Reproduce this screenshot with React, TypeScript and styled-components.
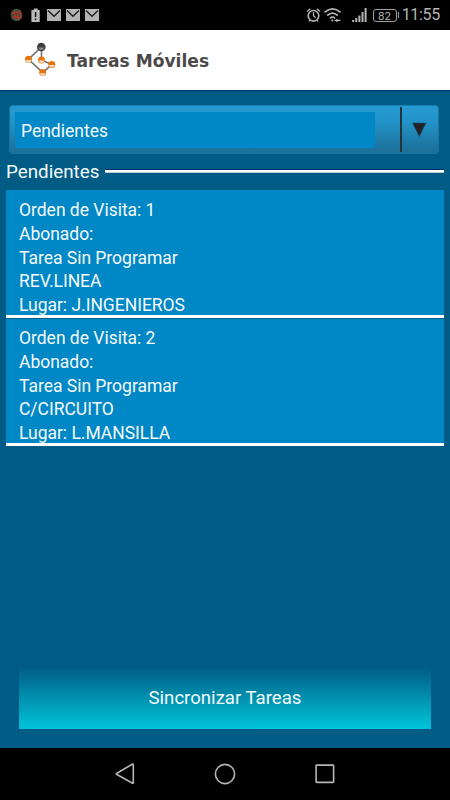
import React from 'react';
import styled, { createGlobalStyle } from 'styled-components';

const GlobalStyle = createGlobalStyle`
  * { box-sizing: border-box; }
  body { margin: 0; background: #000; font-family: Roboto, "Liberation Sans", sans-serif; }
`;

const Screen = styled.div`
  width: 450px;
  height: 800px;
  display: flex;
  flex-direction: column;
  overflow: hidden;
  background: #000;
  color: #f4f9fc;
`;

const StatusBar = styled.div`
  height: 30px;
  display: flex;
  align-items: center;
  justify-content: space-between;
  flex: none;
  padding: 0 10px 0 9px;
  color: #b4b4b4;
`;

const StatusGroup = styled.div`
  display: flex;
  align-items: center;
  height: 30px;
  svg { display: block; }
`;

const Battery = styled.div`
  width: 24px;
  height: 13px;
  margin-left: 6px;
  border: 1px solid #a0a0a0;
  border-radius: 3px;
  font: 11.5px/12px Roboto, sans-serif;
  text-align: center;
`;

const BatteryTip = styled.div`
  width: 1.5px;
  height: 6px;
  margin-left: 1px;
  background: #999;
`;

const Clock = styled.span`
  width: 36px;
  margin-left: 5px;
  display: flex;
  justify-content: flex-end;
  font: 16px/32px Roboto, sans-serif;
  letter-spacing: -0.3px;
  white-space: nowrap;
`;

const Header = styled.header`
  height: 61px;
  flex: none;
  display: flex;
  align-items: center;
  padding-left: 20px;
  background: #fff;
  border-bottom: 1px solid #00326e;
  svg { display: block; }
`;

const Title = styled.h1`
  margin: 1px 0 0 7px;
  color: #4c4849;
  font: 700 17.1px/24px "DejaVu Sans", sans-serif;
  white-space: nowrap;
`;

const Main = styled.main`
  flex: 1;
  display: flex;
  flex-direction: column;
  padding: 14px 6px 19px;
  background: #005c85;
`;

const Select = styled.div`
  height: 49px;
  flex: none;
  margin: 0 5px 0 3px;
  padding-left: 5px;
  display: flex;
  align-items: center;
  border: 1px solid #17759f;
  border-top-color: #1880b0;
  border-radius: 4px;
  background: linear-gradient(#259bd3, #2292c8 35%, #1d749f 88%, #1c7099);
`;

const SelectValue = styled.div`
  width: 360px;
  height: 36px;
  padding-left: 6px;
  background: #0087c5;
  font-size: 17.5px;
  line-height: 39px;
`;

const SelectDivider = styled.div`
  width: 2px;
  height: 45px;
  margin-left: 25px;
  background: #24323a;
`;

const SelectArrow = styled.svg`
  display: block;
  margin-left: 10px;
`;

const SectionHeading = styled.div`
  display: flex;
  align-items: center;
  height: 36px;
  gap: 6px;
  font-size: 18.8px;
  line-height: 38px;
`;

const SectionRule = styled.div`
  flex: 1;
  height: 4px;
  background: #fff;
  border-top: 1px solid #002d70;
  border-bottom: 1px solid #bdcbd8;
  margin-top: -2px;
`;

const TaskList = styled.div`
  display: flex;
  flex-direction: column;
`;

const Task = styled.article`
  height: 128px;
  padding: 8px 0 0 13px;
  background: #0087c5;
  border-bottom: 3px solid #fff;
  & + & { padding-top: 7px; border-top: 1px solid #00608c; }
`;

const TaskLine = styled.div`
  height: 23.75px;
  font-size: 17.5px;
  letter-spacing: -0.02px;
  line-height: 24px;
  white-space: nowrap;
`;

const SyncButton = styled.button`
  height: 62px;
  margin: auto 13px 0;
  padding: 0;
  border: 0;
  background: linear-gradient(#005c85, #00c4d9);
  color: #f4f9fc;
  font: 18.6px Roboto, sans-serif;
`;

const NavBar = styled.nav`
  height: 52px;
  flex: none;
  display: flex;
  justify-content: center;
  align-items: center;
  gap: 76px;
  svg { display: block; }
`;

const tasks = [
  ['Orden de Visita: 1', 'Abonado:', 'Tarea Sin Programar', 'REV.LINEA', 'Lugar: J.INGENIEROS'],
  ['Orden de Visita: 2', 'Abonado:', 'Tarea Sin Programar', 'C/CIRCUITO', 'Lugar: L.MANSILLA'],
];

const nodes = [
  { x: 41.3, y: 47, r: 4.3, top: '#403b3c', bottom: '#8b8788' },
  { x: 28.5, y: 59.3, r: 3.5, top: '#e87509', bottom: '#f0dcc9' },
  { x: 41.5, y: 60, r: 3.5, top: '#e87509', bottom: '#f0dcc9' },
  { x: 51.8, y: 64.5, r: 3.5, top: '#e87509', bottom: '#f0dcc9' },
  { x: 42.7, y: 72.6, r: 3.5, top: '#e87509', bottom: '#f0dcc9' },
];

function Logo() {
  return (
    <svg width="40" height="42" viewBox="20 39 40 42">
      <path d="M41.3 47 28.5 59.3 42.7 72.6 51.8 64.5 41.5 60V47" fill="none" stroke="#777172" strokeWidth="1.6" />
      {nodes.map((n) => (
        <g key={`${n.x}-${n.y}`}>
          <circle cx={n.x} cy={n.y} r={n.r} fill={n.top} />
          <path d={`M${n.x - 3} ${n.y + 0.6}h6q-.8 2.5-3 2.5t-3-2.5`} fill={n.bottom} />
        </g>
      ))}
    </svg>
  );
}

function Notifications() {
  return (
    <svg width="94" height="20" viewBox="9 5 94 20">
      <circle cx="16.5" cy="15" r="6" fill="#314b40" />
      <path d="M11.5 13.5h3v-2h2l1.5 2 2-2 1 6-2 2-1-4-2 3-1-3-3 3" fill="none" stroke="#b53420" strokeWidth="1.5" />
      <path d="M12 11.5q4-4 8.5-.5M12 18q4 4 8 1" fill="none" stroke="#43614f" />
      <path d="M33.7 8.5h4V10h2v12h-8.3V10h2.3z" fill="#b8b8b8" />
      <path d="M35.6 12v5M35.6 18.5v1.5" stroke="#111" strokeWidth="1.5" />
      {[47, 66, 85].map((x) => (
        <g key={x}>
          <path d={`M${x} 9h14v12h-14z`} fill="#b3b3b3" />
          <path d={`m${x + 1} 10.5 6 5.8 6-5.8`} fill="none" stroke="#171717" strokeWidth="1.2" />
        </g>
      ))}
    </svg>
  );
}

function Signals() {
  return (
    <svg width="61" height="20" viewBox="306 5 61 20" fill="none" stroke="#b4b4b4">
      <circle cx="313.5" cy="15.8" r="5.3" strokeWidth="1.6" />
      <path d="M313.5 12.3v3.5l2 2M307.2 11.5l3-2.7M319.8 11.5l-3-2.7M310 20l-1 1.5M317 20l1 1.5" strokeWidth="1.3" />
      <path d="M324.5 12.3q8-6.8 16 0M327.2 15.5q5.3-4.7 10.6 0M330 18.3q2.5-2.2 5 0" strokeWidth="1.7" />
      <circle cx="332.3" cy="20.5" r="1.1" fill="#b4b4b4" stroke="none" />
      <path d="M334.5 20.4h6M337 19v3" strokeWidth="1.4" />
      <path d="M353.2 22v-2M356.3 22v-4M359.4 22v-6.5M362.5 22v-10M365.6 22V8" strokeWidth="2" />
    </svg>
  );
}

export default function App() {
  return (
    <>
      <GlobalStyle />
      <Screen>
        <StatusBar>
          <StatusGroup><Notifications /></StatusGroup>
          <StatusGroup>
            <Signals />
            <Battery>82</Battery>
            <BatteryTip />
            <Clock>11:55</Clock>
          </StatusGroup>
        </StatusBar>
        <Header><Logo /><Title>Tareas Móviles</Title></Header>
        <Main>
          <Select>
            <SelectValue>Pendientes</SelectValue>
            <SelectDivider />
            <SelectArrow width="15" height="16" viewBox="0 0 15 16">
              <path d="M.5 1h13.5L7.3 14.5z" fill="#202426" stroke="#164f6c" strokeWidth=".5" />
            </SelectArrow>
          </Select>
          <SectionHeading>Pendientes<SectionRule /></SectionHeading>
          <TaskList>
            {tasks.map((lines) => (
              <Task key={lines[0]}>
                {lines.map((line) => <TaskLine key={line}>{line}</TaskLine>)}
              </Task>
            ))}
          </TaskList>
          <SyncButton>Sincronizar Tareas</SyncButton>
        </Main>
        <NavBar>
          <svg width="24" height="24" viewBox="0 0 24 24" fill="none" stroke="#b5b5b5" strokeWidth="1.6"><path d="m3.5 11.5 16-9.5q.8-.2.8.8v17.8q0 1-.8.6L3.5 12.2z" /></svg>
          <svg width="24" height="24" viewBox="0 0 24 24" fill="none" stroke="#b5b5b5" strokeWidth="1.6"><circle cx="12" cy="12" r="9.6" /></svg>
          <svg width="24" height="24" viewBox="0 0 24 24" fill="none" stroke="#b5b5b5" strokeWidth="1.6"><rect x="3.1" y="3.1" width="17.5" height="17.3" rx=".6" /></svg>
        </NavBar>
      </Screen>
    </>
  );
}
